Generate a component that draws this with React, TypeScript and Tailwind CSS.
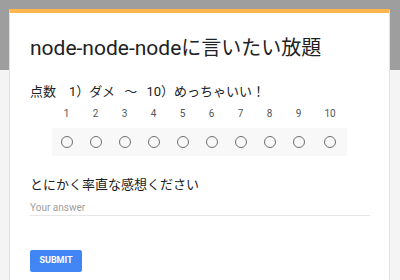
const scale = ["1", "2", "3", "4", "5", "6", "7", "8", "9", "10"];

export default function App() {
  return (
    <div
      className="h-[280px] w-[400px] overflow-hidden bg-[linear-gradient(#9e9e9e_0_70px,#f4f4f4_70px)] pl-[9px] pr-[10px] pt-[9px]"
      style={{ fontFamily: "Roboto, 'Noto Sans CJK JP', sans-serif" }}
    >
      <div className="h-[300px] border-x border-t-4 border-x-[#e0e0e0] border-t-[#ffb74d] bg-white px-[20px] pt-[19px]">
        <h1 className="whitespace-nowrap text-[21px] leading-[32px] text-[#202124]">
          node-node-node<span className="text-[20px]">に言いたい放題</span>
        </h1>

        <p className="mt-[18px] whitespace-nowrap text-[13px] leading-[20px] text-[#202124]">
          点数　1）ダメ{"\u2002\u2009"}〜{"\u2002\u2009"}10）めっちゃいい！
        </p>

        <div className="ml-[22px] mt-[5px] flex text-[10px] leading-[14px] text-[#555]">
          {scale.map((n) => (
            <div key={n} className={n === "10" ? "w-[34px] text-center" : "w-[29px] text-center"}>
              {n}
            </div>
          ))}
        </div>
        <div className="ml-[22px] mt-[7px] flex h-[28px] w-[295px] items-center bg-[#f8f8f8]">
          {scale.map((n) => (
            <div key={n} className={n === "10" ? "flex w-[34px] justify-center" : "flex w-[29px] justify-center"}>
              <span className="block h-[12px] w-[12px] rounded-full border-[1.5px] border-[#6f6f6f]" />
            </div>
          ))}
        </div>

        <p className="mt-[19px] text-[13px] leading-[20px] text-[#202124]">とにかく率直な感想ください</p>
        <div className="mt-[5px] w-[340px] border-b border-[#e6e6e6] text-[10px] leading-[15px] text-[#9e9e9e]">
          Your answer
        </div>

        <button className="mt-[34px] h-[22px] w-[52px] rounded-[2px] bg-[#4285f4] text-[9px] font-bold text-white">
          SUBMIT
        </button>
      </div>
    </div>
  );
}
